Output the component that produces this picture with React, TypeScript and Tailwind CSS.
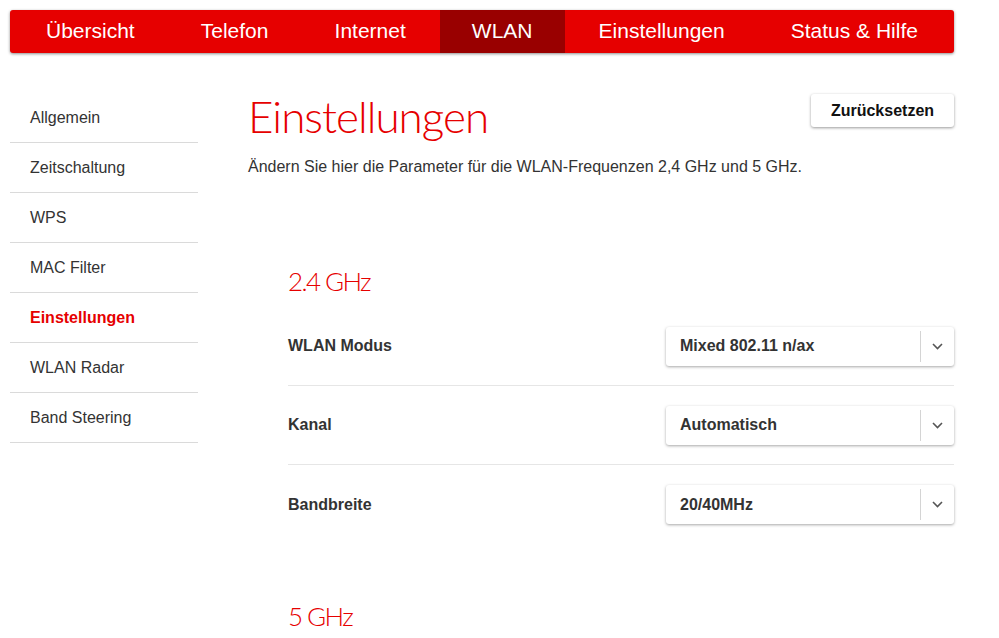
import React from "react";

const navItems = ["Übersicht", "Telefon", "Internet", "WLAN", "Einstellungen", "Status & Hilfe"];
const sideItems = ["Allgemein", "Zeitschaltung", "WPS", "MAC Filter", "Einstellungen", "WLAN Radar", "Band Steering"];

function Chevron() {
  return (
    <svg width="11" height="7" viewBox="0 0 11 7" fill="none">
      <path d="M1 1l4.5 4.5L10 1" stroke="#555" strokeWidth="1.6" />
    </svg>
  );
}

function Select({ value }: { value: string }) {
  return (
    <div className="flex h-[39px] w-[288px] items-center rounded-[3px] bg-white shadow-[0_1px_3px_rgba(0,0,0,0.35)]">
      <div className="flex-1 pl-[14px] text-[16px] font-bold text-[#333]">{value}</div>
      <div className="h-[31px] w-px bg-[#d4d4d4]" />
      <div className="flex w-[33px] items-center justify-center">
        <Chevron />
      </div>
    </div>
  );
}

function Row({ label, value, border }: { label: string; value: string; border: boolean }) {
  return (
    <div className={`flex h-[79px] items-center justify-between ${border ? "border-b border-[#e6e6e6]" : ""}`}>
      <div className="text-[16px] font-bold text-[#333]">{label}</div>
      <Select value={value} />
    </div>
  );
}

export default function App() {
  return (
    <div className="min-h-[638px] w-[999px] bg-white pl-[10px] pt-[10px]" style={{ fontFamily: '"Liberation Sans", Arial, sans-serif' }}>
      <nav className="flex h-[43px] w-[944px] justify-between rounded-[3px] bg-[#e60000] px-[4px] shadow-[0_1px_3px_rgba(0,0,0,0.45)]">
        {navItems.map((n) => (
          <div
            key={n}
            className={`flex shrink-0 items-center whitespace-nowrap px-[32px] pb-[1px] text-[21px] text-white ${n === "WLAN" ? "bg-[#990000]" : ""}`}
          >
            {n}
          </div>
        ))}
      </nav>
      <div className="mt-[40px] flex">
        <aside className="w-[188px] shrink-0">
          {sideItems.map((s) => (
            <div
              key={s + (s === "Einstellungen" ? "a" : "")}
              className={`flex h-[50px] items-center border-b border-[#dadada] pl-[20px] text-[16px] ${
                s === "Einstellungen" ? "font-bold text-[#e60000]" : "text-[#333]"
              }`}
            >
              {s}
            </div>
          ))}
        </aside>
        <main className="ml-[50px] w-[706px]">
          <div className="flex items-start justify-between">
            <h1 className="mt-[-3px] text-[44px] font-light leading-[53px] tracking-[-1px] text-[#e60000]" style={{ fontFamily: 'Lato, "Open Sans", sans-serif' }}>
              Einstellungen
            </h1>
            <button className="mt-[1px] h-[33px] w-[143px] rounded-[3px] bg-white text-[16px] font-bold text-[#111] shadow-[0_1px_3px_rgba(0,0,0,0.4)]">
              Zurücksetzen
            </button>
          </div>
          <p className="mt-[12px] text-[16px] text-[#333]">
            Ändern Sie hier die Parameter für die WLAN-Frequenzen 2,4 GHz und 5 GHz.
          </p>
          <div className="ml-[40px] mt-[85px]">
            <h2 className="text-[26px] font-light leading-[34px] tracking-[-1.6px] text-[#e60000]" style={{ fontFamily: 'Lato, "Open Sans", sans-serif' }}>
              2.4 GHz
            </h2>
            <div className="mt-[9px]">
              <Row label="WLAN Modus" value="Mixed 802.11 n/ax" border />
              <Row label="Kanal" value="Automatisch" border />
              <Row label="Bandbreite" value="20/40MHz" border={false} />
            </div>
            <h2 className="mt-[55px] text-[26px] font-light leading-[34px] tracking-[-1.6px] text-[#e60000]" style={{ fontFamily: 'Lato, "Open Sans", sans-serif' }}>
              5 GHz
            </h2>
          </div>
        </main>
      </div>
    </div>
  );
}
